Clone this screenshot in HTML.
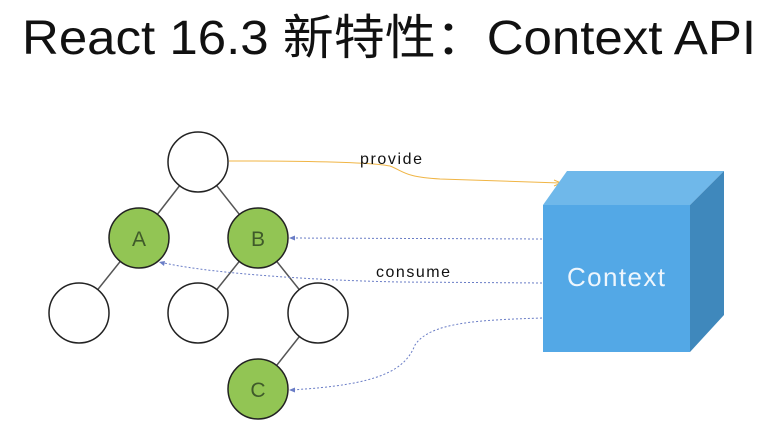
<!DOCTYPE html>
<html><head><meta charset="utf-8"><style>
html,body{margin:0;padding:0;background:#fff;}
svg{display:block;}
</style></head><body>
<svg width="782" height="430" viewBox="0 0 782 430" xmlns="http://www.w3.org/2000/svg">
<text x="22" y="54" font-family="'Liberation Sans','Noto Sans CJK SC',sans-serif" font-size="48" fill="#111" textLength="734" lengthAdjust="spacingAndGlyphs">React 16.3 新特性：Context API</text>
<g stroke="#555" stroke-width="1.5">
<line x1="198" y1="162" x2="139" y2="238"/>
<line x1="198" y1="162" x2="258" y2="238"/>
<line x1="139" y1="238" x2="79" y2="313"/>
<line x1="258" y1="238" x2="198" y2="313"/>
<line x1="258" y1="238" x2="318" y2="313"/>
<line x1="318" y1="313" x2="258" y2="389"/>
</g>
<g stroke="#222" stroke-width="1.5">
<circle cx="198" cy="162" r="30" fill="#fff"/>
<circle cx="79" cy="313" r="30" fill="#fff"/>
<circle cx="198" cy="313" r="30" fill="#fff"/>
<circle cx="318" cy="313" r="30" fill="#fff"/>
<circle cx="139" cy="238" r="30" fill="#92c554"/>
<circle cx="258" cy="238" r="30" fill="#92c554"/>
<circle cx="258" cy="389" r="30" fill="#92c554"/>
</g>
<g font-family="'Liberation Sans',sans-serif" font-size="21" fill="#3f5a2a" text-anchor="middle">
<text x="139" y="246">A</text><text x="258" y="246">B</text><text x="258" y="397">C</text>
</g>
<path d="M229 161 C300 161 370 162 390 166 C405 172 405 177 440 179 L560 183" fill="none" stroke="#f0b545" stroke-width="1"/>
<path d="M554 180 L561 183 L554 186" fill="none" stroke="#f0b545" stroke-width="1"/>
<g fill="none" stroke="#6a7dc6" stroke-width="1" stroke-dasharray="2,2">
<path d="M542 239 L290 238"/>
<path d="M542 283 L400 282 C300 280 200 272 160 262"/>
<path d="M542 318 C480 320 430 322 415 345 C405 370 380 385 290 390"/>
</g>
<g fill="#6a7dc6">
<path d="M289 238 L295 235.5 L295 240.5Z"/>
<path d="M159 262 L165 261 L164 266Z"/>
<path d="M289 390 L295 387.5 L295 392.5Z"/>
</g>
<g font-family="'Liberation Sans',sans-serif" font-size="16" fill="#111">
<text x="360" y="164" textLength="62">provide</text>
<text x="376" y="277" textLength="74">consume</text>
</g>
<polygon points="543,205 567,171 724,171 690,205" fill="#6fb8ea"/>
<polygon points="690,205 724,171 724,315 690,352" fill="#3f88bc"/>
<rect x="543" y="205" width="147" height="147" fill="#53a8e6"/>
<text x="616" y="286" font-family="'Liberation Sans',sans-serif" font-size="26" fill="#eef6fd" text-anchor="middle" textLength="98">Context</text>
</svg>
</body></html>
